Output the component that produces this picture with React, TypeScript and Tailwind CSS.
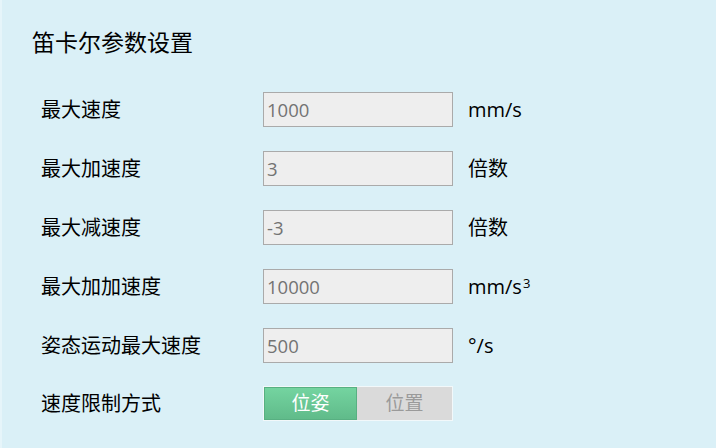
import React from "react";

const rows = [
  { label: "最大速度", value: "1000", unit: <>mm/s</> },
  { label: "最大加速度", value: "3", unit: <>倍数</> },
  { label: "最大减速度", value: "-3", unit: <>倍数</> },
  {
    label: "最大加加速度",
    value: "10000",
    unit: (
      <>
        mm/s<sup className="text-[13px] relative top-[-6px] ml-[1px]">3</sup>
      </>
    ),
  },
  { label: "姿态运动最大速度", value: "500", unit: <>°/s</> },
];

export default function App() {
  return (
    <div
      className="w-[716px] h-[448px] bg-[#daf0f7] border-l-2 border-[#e6f5fa] overflow-hidden text-black"
      style={{ fontFamily: '"Open Sans", "Noto Sans CJK SC", sans-serif' }}
    >
      <div className="pl-[30px] pt-[26px]">
        <h1 className="text-[23px] leading-[32px] font-normal">笛卡尔参数设置</h1>
      </div>
      <div className="pl-[39px] pt-[34px] flex flex-col gap-[24px]">
        {rows.map((r) => (
          <div key={r.label} className="flex items-center h-[35px]">
            <div className="w-[222px] text-[20px] leading-none">{r.label}</div>
            <div className="w-[190px] h-[35px] bg-[#eeeeee] border border-[#aaaaaa] flex items-center pl-[3px] text-[18.5px] text-[#737373]">
              {r.value}
            </div>
            <div className="ml-[15px] text-[20px] leading-none">{r.unit}</div>
          </div>
        ))}
        <div className="flex items-center h-[35px] -mt-[1px]">
          <div className="w-[222px] text-[20px] leading-none">速度限制方式</div>
          <div className="w-[190px] h-[35px] border border-[#f2f8fa] flex bg-[#dadada]">
            <div className="w-[93px] h-full bg-gradient-to-b from-[#74d4a0] to-[#60bb8a] border border-[#58b082] flex items-center justify-center text-white text-[19px]">
              位姿
            </div>
            <div className="flex-1 flex items-center justify-center text-[#9a9a9a] text-[19px]">位置</div>
          </div>
        </div>
      </div>
    </div>
  );
}
